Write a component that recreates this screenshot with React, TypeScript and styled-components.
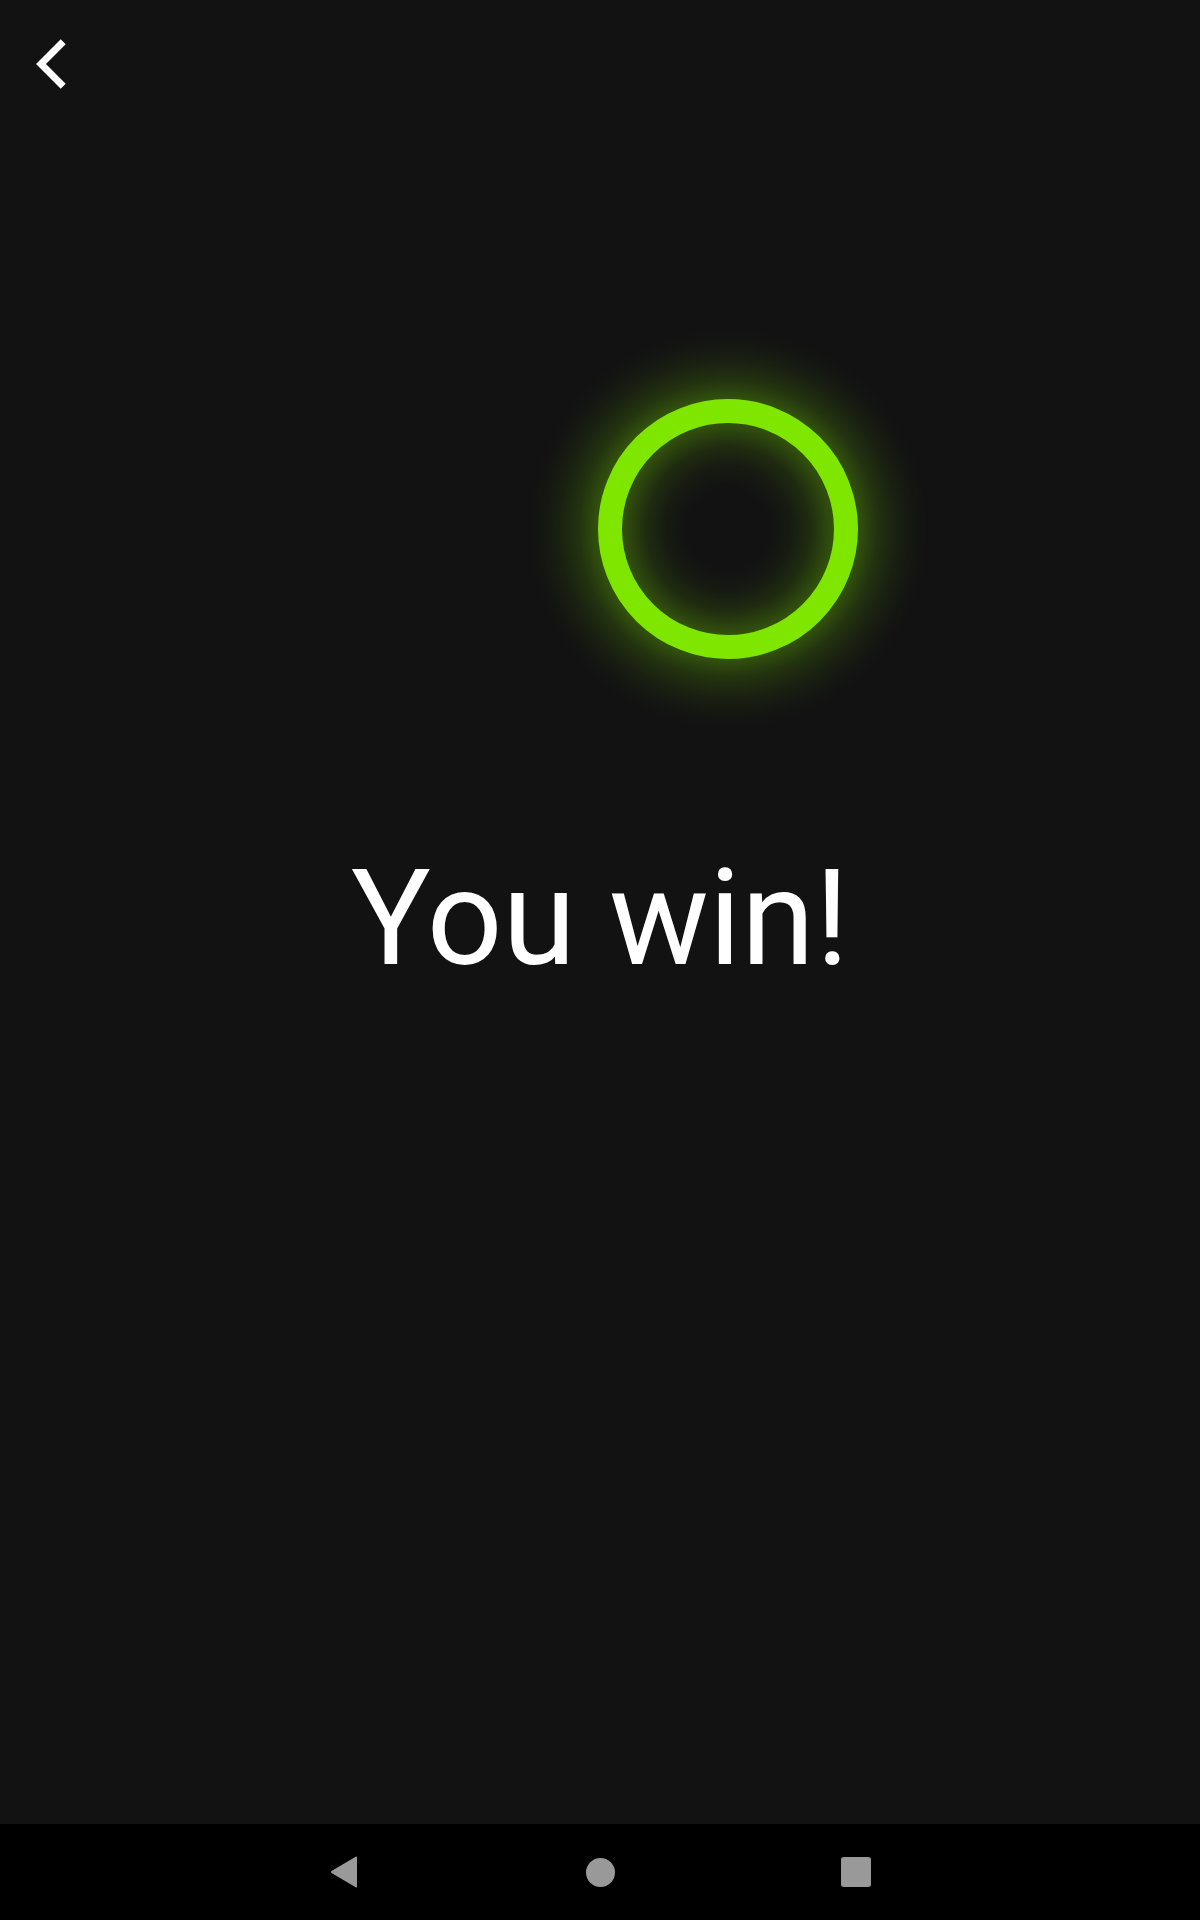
import React from "react";
import styled, { createGlobalStyle } from "styled-components";

const Global = createGlobalStyle`
  html, body { margin: 0; padding: 0; background: #121212; }
  body { font-family: Roboto, "Noto Sans", "Liberation Sans", sans-serif; }
  * { box-sizing: border-box; }
`;

const Page = styled.div`
  width: 1200px;
  height: 1920px;
  display: flex;
  flex-direction: column;
  background: #121212;
  overflow: hidden;
`;

const Header = styled.header`
  height: 128px;
  padding: 16px 0 0 16px;
  flex: none;
`;

const BackButton = styled.button`
  width: 96px;
  height: 96px;
  padding: 0;
  border: none;
  background: transparent;
  display: block;
  cursor: pointer;
`;

const Stage = styled.main`
  position: relative;
  flex: 1;
  display: flex;
  flex-direction: column;
  align-items: center;
`;

const Glow = styled.div`
  position: absolute;
  left: 528px;
  top: 201px;
  width: 400px;
  height: 400px;
  border-radius: 50%;
  display: flex;
  align-items: center;
  justify-content: center;
  background: radial-gradient(
    circle closest-side,
    rgba(126, 230, 0, 0) 0px,
    rgba(126, 230, 0, 0) 40px,
    rgba(126, 230, 0, 0.04) 62px,
    rgba(126, 230, 0, 0.12) 82px,
    rgba(126, 230, 0, 0.3) 106px,
    rgba(126, 230, 0, 0.3) 130px,
    rgba(126, 230, 0, 0.16) 148px,
    rgba(126, 230, 0, 0.07) 168px,
    rgba(126, 230, 0, 0.02) 186px,
    rgba(126, 230, 0, 0) 200px
  );
`;

const Ring = styled.div<{ $color: string }>`
  width: 260px;
  height: 260px;
  border-radius: 50%;
  border: 24px solid ${(p) => p.$color};
`;

const Result = styled.h1`
  margin: 724px 0 0 0;
  font-family: Roboto, "Noto Sans", sans-serif;
  font-weight: 400;
  font-size: 133px;
  line-height: 1;
  color: #ffffff;
  letter-spacing: 0;
`;

const NavBar = styled.nav`
  height: 96px;
  flex: none;
  background: #000000;
  display: flex;
  justify-content: center;
  align-items: center;
  gap: 192px;
`;

const NavSlot = styled.div`
  width: 64px;
  height: 64px;
  display: flex;
  align-items: center;
  justify-content: center;
`;

const HomeDot = styled.div`
  width: 29px;
  height: 29px;
  border-radius: 50%;
  background: #999999;
`;

const RecentSquare = styled.div`
  width: 30px;
  height: 30px;
  border-radius: 3px;
  background: #999999;
`;

export default function App() {
  return (
    <>
      <Global />
      <Page>
        <Header>
          <BackButton aria-label="Back">
            <svg width="96" height="96" viewBox="0 0 96 96">
              <polyline
                points="47.2,25.8 25,48 47.2,70.2"
                fill="none"
                stroke="#ffffff"
                strokeWidth="7"
                strokeLinecap="butt"
                strokeLinejoin="miter"
              />
            </svg>
          </BackButton>
        </Header>
        <Stage>
          <Glow>
            <Ring $color="#7fe600" />
          </Glow>
          <Result>You win!</Result>
        </Stage>
        <NavBar>
          <NavSlot>
            <svg width="30" height="34" viewBox="0 0 30 34">
              <path
                d="M28 2.5 Q28 1 26.7 1.8 L2.5 16 Q1.3 17 2.5 18 L26.7 32.2 Q28 33 28 31.5 Z"
                fill="#999999"
              />
            </svg>
          </NavSlot>
          <NavSlot>
            <HomeDot />
          </NavSlot>
          <NavSlot>
            <RecentSquare />
          </NavSlot>
        </NavBar>
      </Page>
    </>
  );
}
